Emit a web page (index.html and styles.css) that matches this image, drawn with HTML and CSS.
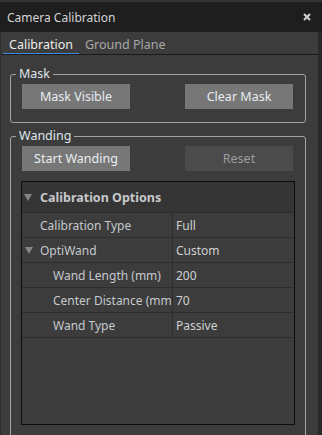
FILE: index.html
```html
<!DOCTYPE html>
<html lang="en">
<head>
    <meta charset="UTF-8">
    <meta name="viewport" content="width=device-width, initial-scale=1.0">
    <title>Camera Calibration</title>
    <link rel="stylesheet" href="styles.css">
</head>
<body>

    <div class="window">
        <div class="titlebar">
            <span>Camera Calibration</span>
            <svg class="close" width="8" height="8" viewBox="0 0 8 8">
                <path d="M1 1 L7 7 M7 1 L1 7" stroke="#d2d2d2" stroke-width="2" fill="none"/>
            </svg>
        </div>

        <div class="panel">
            <div class="tabs">
                <span class="tab active">Calibration</span>
                <span class="tab">Ground Plane</span>
            </div>

            <div class="page">
                <fieldset class="group">
                    <legend>Mask</legend>
                    <div class="btn-row">
                        <button class="btn">Mask Visible</button>
                        <button class="btn">Clear Mask</button>
                    </div>
                </fieldset>

                <fieldset class="group wanding">
                    <legend>Wanding</legend>
                    <div class="btn-row">
                        <button class="btn">Start Wanding</button>
                        <button class="btn disabled">Reset</button>
                    </div>

                    <div class="props">
                        <div class="props-head"><span class="arrow"></span>Calibration Options</div>
                        <div class="props-rows">
                            <div class="name">Calibration Type</div>
                            <div class="value">Full</div>
                            <div class="name parent"><span class="arrow"></span>OptiWand</div>
                            <div class="value">Custom</div>
                            <div class="name child">Wand Length (mm)</div>
                            <div class="value">200</div>
                            <div class="name child">Center Distance (mm)</div>
                            <div class="value">70</div>
                            <div class="name child">Wand Type</div>
                            <div class="value">Passive</div>
                        </div>
                    </div>
                </fieldset>
            </div>
        </div>
    </div>

</body>
</html>
```

FILE: styles.css
```css
body {
    margin: 0;
    background-color: #292929;
    font-family: "Noto Sans", "Open Sans", sans-serif;
}
.window {
    width: 322px;
    height: 435px;
    display: flex;
    flex-direction: column;
    overflow: hidden;
}
.titlebar {
    height: 30px;
    border-top: 2px solid #333;
    background-color: #1e1e1e;
    color: #d4d4d4;
    font-size: 12px;
    display: flex;
    align-items: center;
    justify-content: space-between;
    padding: 0 11px 0 7px;
    flex-shrink: 0;
}
.panel {
    flex: 1;
    min-height: 0;
    width: 318px;
    box-sizing: border-box;
    background-color: #3c3c3c;
    border-left: 1px solid #2f2f2f;
    display: flex;
    flex-direction: column;
    overflow: hidden;
}
.tabs {
    display: flex;
    padding-left: 2px;
    border-bottom: 1px solid #1a1a1a;
    flex-shrink: 0;
}
.tab {
    padding: 5px 6px 0 6px;
    line-height: 16px;
    font-size: 12.5px;
    color: #a8a8a8;
    border-bottom: 1px solid transparent;
}
.tab.active {
    color: #ececec;
    border-bottom-color: #3d8ee0;
}
.page {
    padding: 0 12px 0 9px;
}
.group {
    margin: 11px 0 0 0;
    padding: 0 10px 13px 10px;
    border: 1px solid #a3a3a3;
    border-radius: 3px;
}
.group legend {
    margin-left: -5px;
    padding: 0 3px;
    line-height: 16px;
    font-size: 12.5px;
    color: #dfe6ec;
}
.wanding {
    margin-top: 5px;
    padding-bottom: 20px;
}
.btn-row {
    display: flex;
    justify-content: space-between;
    padding: 0 2px 0 1px;
    margin-top: 2px;
}
.btn {
    width: 108px;
    height: 25px;
    padding: 0;
    border: none;
    background-color: #777;
    color: #e8eef2;
    font-family: inherit;
    font-size: 12.5px;
}
.btn.disabled {
    background-color: #4b4b4b;
    color: #9d9d9d;
}
.props {
    margin-top: 10px;
    height: 244px;
    box-sizing: border-box;
    border: 1px solid #0c0c0c;
    background-color: #3c3c3c;
    font-size: 12px;
}
.props-head {
    height: 30px;
    border-bottom: 1px solid #2d2d2d;
    background-color: #353535;
    display: flex;
    align-items: center;
    padding-left: 2px;
    font-weight: bold;
    font-size: 12.5px;
    color: #c6c9cc;
}
.arrow {
    width: 0;
    height: 0;
    border-left: 4px solid transparent;
    border-right: 4px solid transparent;
    border-top: 7px solid #858585;
    margin-right: 8px;
}
.props-rows {
    display: grid;
    grid-template-columns: 151px 1fr;
}
.props-rows > div {
    height: 24px;
    border-bottom: 1px solid #2d2d2d;
    display: flex;
    align-items: center;
    white-space: nowrap;
    overflow: hidden;
}
.name {
    padding-left: 18px;
    border-right: 1px solid #2d2d2d;
    color: #c4c9ce;
}
.name.parent {
    padding-left: 3px;
}
.name.parent .arrow {
    margin-right: 7px;
}
.name.child {
    padding-left: 31px;
}
.value {
    padding-left: 3px;
    color: #d0d0d0;
}
```
